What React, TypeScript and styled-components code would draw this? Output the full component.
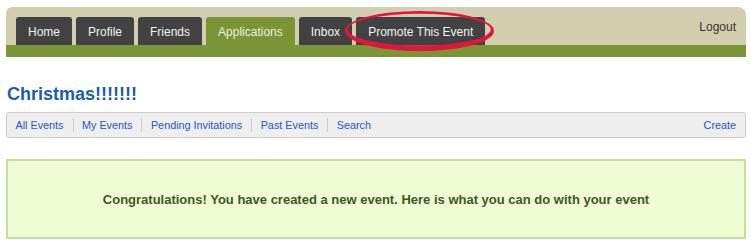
import { FC } from 'react'
import styled, { createGlobalStyle } from 'styled-components'

const tabs = ['Home', 'Profile', 'Friends', 'Applications', 'Inbox', 'Promote This Event']
const activeTab = 'Applications'
const subLinks = ['All Events', 'My Events', 'Pending Invitations', 'Past Events', 'Search']

const GlobalStyle = createGlobalStyle`
  html, body {
    margin: 0;
    padding: 0;
    background: #ffffff;
    font-family: 'Liberation Sans', Arial, sans-serif;
  }
`

const App: FC = () => {
  return (
    <>
      <GlobalStyle />
      <Page>
        <Header>
          <TabRow>
            <Tabs>
              {tabs.map((tab) => (
                <Tab key={tab} $active={tab === activeTab}>
                  {tab}
                </Tab>
              ))}
            </Tabs>
            <Logout>Logout</Logout>
          </TabRow>
          <GreenBar />
          {/* hand drawn highlight around the promote tab */}
          <Highlight width="740" height="60" viewBox="0 0 740 60">
            <path
              fillRule="evenodd"
              fill="#e2163d"
              d="M339 24 A74.5 20 0 1 0 488 24 A74.5 20 0 1 0 339 24 Z M341.8 22.6 A71.5 15.8 0 1 1 484.8 22.6 A71.5 15.8 0 1 1 341.8 22.6 Z"
            />
          </Highlight>
        </Header>

        <Title>Christmas!!!!!!!</Title>

        <SubNav>
          <SubLinks>
            {subLinks.map((link) => (
              <SubLink key={link}>{link}</SubLink>
            ))}
          </SubLinks>
          <SubLink>Create</SubLink>
        </SubNav>

        <Notice>Congratulations! You have created a new event. Here is what you can do with your event</Notice>
      </Page>
    </>
  )
}

const Page = styled.div`
  width: 740px;
  padding: 7px 5px 0 6px;
  display: flex;
  flex-direction: column;
`

const Header = styled.div`
  position: relative;
  background: #d1cfb0;
  border-radius: 6px 8px 0 0;
  display: flex;
  flex-direction: column;
`

const TabRow = styled.div`
  display: flex;
  justify-content: space-between;
  padding: 10px 10px 0 10px;
  height: 28px;
`

const Tabs = styled.div`
  display: flex;
  gap: 4px;
`

const Tab = styled.div<{ $active?: boolean }>`
  height: 28px;
  padding: 1px 12px 0;
  box-sizing: border-box;
  display: flex;
  align-items: center;
  font-size: 12px;
  color: ${(p) => (p.$active ? '#e8f0e0' : '#f2f2f2')};
  background: ${(p) => (p.$active ? '#7a9436' : '#424242')};
  border-radius: 3px 3px 0 0;
`

const Logout = styled.div`
  font-size: 12px;
  color: #333333;
  padding-top: 3px;
  line-height: 15px;
`

const GreenBar = styled.div`
  height: 12px;
  background: #7a9436;
`

const Highlight = styled.svg`
  position: absolute;
  left: 0;
  top: 0;
  pointer-events: none;
  overflow: visible;
`

const Title = styled.h1`
  margin: 26px 0 0 1px;
  font-size: 18px;
  line-height: 22px;
  font-weight: bold;
  color: #1b5cab;
`

const SubNav = styled.div`
  margin-top: 7px;
  height: 24px;
  border: 1px solid #cccccc;
  border-radius: 3px;
  background: #eeeeee;
  display: flex;
  align-items: center;
  justify-content: space-between;
`

const SubLinks = styled.div`
  display: flex;
  align-items: center;
`

const SubLink = styled.a`
  font-size: 10.8px;
  line-height: 14px;
  color: #2357c0;
  padding: 0 9px 0 8.5px;
  cursor: pointer;

  & + & {
    border-left: 1px solid #cccccc;
  }
`

const Notice = styled.div`
  margin-top: 21px;
  height: 76px;
  border: 2px solid #c6e09c;
  background: #effcd3;
  display: flex;
  align-items: center;
  justify-content: center;
  font-size: 13px;
  font-weight: bold;
  color: #3d5a1e;
`

export default App
